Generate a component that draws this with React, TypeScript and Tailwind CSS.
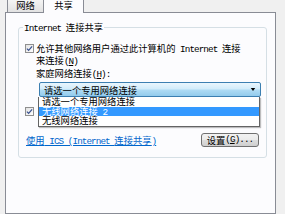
import React from 'react';

const mono = "font-['Liberation_Mono',monospace] tracking-[-0.93px] leading-[0px]";

function L({ children }: { children: React.ReactNode }) {
  return <span className={mono}>{children}</span>;
}

function Acc({ k, tail = '' }: { k: string; tail?: string }) {
  return (
    <span className={mono}>
      (<span className="underline">{k}</span>){tail}
    </span>
  );
}

function CheckBox() {
  return (
    <span className="flex h-[9px] w-[9px] shrink-0 items-center justify-center border border-[#8f8f8f] bg-gradient-to-br from-[#e2e2e2] to-white">
      <svg viewBox="0 0 8 8" className="h-[7px] w-[7px]">
        <path d="M1 4.2 L3 6.2 L7 1.5" fill="none" stroke="#3b5290" strokeWidth="1.4" />
      </svg>
    </span>
  );
}

export default function App() {
  return (
    <div className="flex h-[214px] w-[285px] flex-col overflow-hidden bg-[#f0f0f0] font-['Noto_Sans_CJK_SC',sans-serif] text-[9.3px] leading-[12px] text-black">
      {/* tab strip */}
      <div className="relative z-10 -mb-px flex h-[13px] items-start pl-[7px]">
        <div className="flex h-[12px] w-[37px] items-center justify-center border-x border-[#898c95] bg-gradient-to-b from-[#f4f4f4] to-[#e2e2e2] pb-[2px]">
          网络
        </div>
        <div className="flex h-[13px] w-[40px] items-center justify-center border-r border-[#898c95] bg-[#fcfcfe] pb-[3px]">
          共享
        </div>
      </div>

      {/* tab page */}
      <div className="ml-[5px] mr-[9px] flex-1 border border-[#898c95] bg-[#fcfcfe] pt-[8px]">
        <fieldset className="ml-[12px] mr-[8px] rounded-[3px] border border-[#d5dfe5] pb-[10px] pl-[6px] pr-[4px]">
          <legend className="-ml-[2px] px-[1px]">
            <L>Internet </L>连接共享
          </legend>

          <div className="mt-[9px] flex items-start gap-[2px]">
            <span className="mt-[2px]">
              <CheckBox />
            </span>
            <div>
              允许其他网络用户通过此计算机的<L> Internet </L>连接
              <br />
              来连接<Acc k="N" />
            </div>
          </div>

          <div className="ml-[11px] mt-[1px]">
            家庭网络连接<Acc k="H" tail=":" />
          </div>

          <div className="relative ml-[14px] mt-[3px] w-[222px]">
            <div className="flex h-[15px] items-center justify-between rounded-[2px] border border-[#3c7fb1] bg-[linear-gradient(#eaf6fd,#d2ecfa_45%,#aedbf4_55%,#93cbec)] pl-[4px] pr-[4px]">
              <span>请选一个专用网络连接</span>
              <svg viewBox="0 0 6 4" className="h-[3px] w-[6px]">
                <path d="M0 0 H6 L3 4 Z" fill="#000" />
              </svg>
            </div>
            <div className="absolute -left-[1px] top-full z-20 w-[222px] border-x border-b border-[#646464] bg-white leading-[9.5px] shadow-[1px_1px_1px_rgba(0,0,0,0.25)]">
              <div className="h-[9.5px] pl-[3px]">请选一个专用网络连接</div>
              <div className="h-[9.5px] bg-[#3399ff] pl-[3px] text-white">
                无线网络连接<L> 2</L>
              </div>
              <div className="h-[9.5px] pl-[3px]">无线网络连接</div>
            </div>
          </div>

          <div className="mt-[8px] flex items-start gap-[2px]">
            <span className="mt-[2px]">
              <CheckBox />
            </span>
            {/* covered by the open drop-down list */}
            <div className="ml-[4px] w-[210px] overflow-hidden whitespace-nowrap">
              允许其他网络用户控制或禁用共享的<L> Internet </L>连接<Acc k="O" />
            </div>
          </div>

          <div className="mt-[16px] flex items-center justify-between">
            <span className="ml-[1px] text-[#0066cc] underline">
              使用<L> ICS (Internet </L>连接共享<L>)</L>
            </span>
            <button className="mr-[3px] flex h-[14px] w-[58px] items-center justify-center rounded-[3px] border border-[#707070] bg-[linear-gradient(#f2f2f2,#ebebeb_50%,#dddddd_50%,#cfcfcf)]">
              设置<Acc k="G" tail="..." />
            </button>
          </div>
        </fieldset>
      </div>
    </div>
  );
}
